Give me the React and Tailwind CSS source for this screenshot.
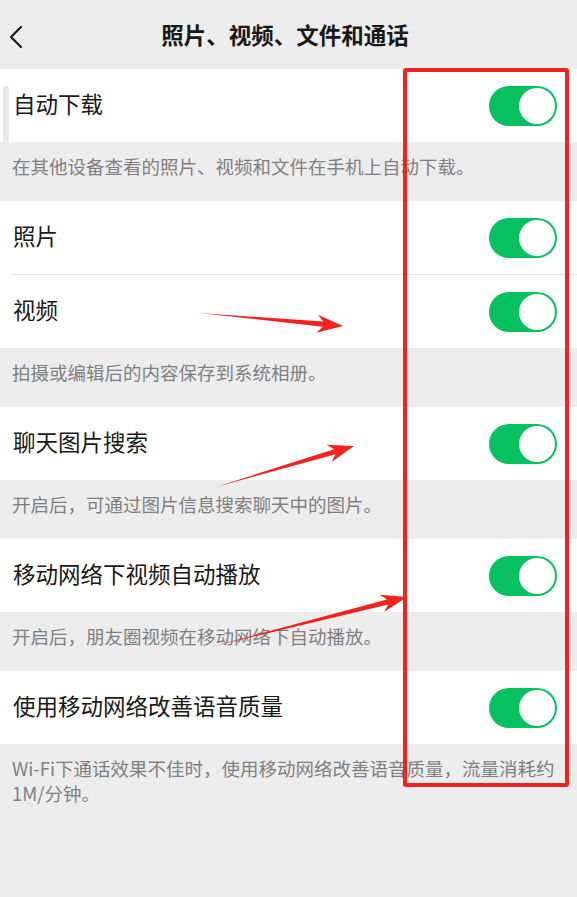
import React from "react";

const FONT = { fontFamily: '"Noto Sans CJK SC", "Noto Sans", sans-serif' };

function Toggle() {
  return (
    <div className="w-[68px] h-[40px] rounded-full bg-[#07c160] flex items-center justify-end pr-[2px]">
      <div className="w-[36px] h-[36px] rounded-full bg-white" />
    </div>
  );
}

function Row({ label, divider }) {
  return (
    <div className="bg-white">
      <div className="h-[73px] flex items-center justify-between pl-[13px] pr-[20px]">
        <span className="text-[22.5px] text-[#191919] leading-none -mt-[4px]">{label}</span>
        <Toggle />
      </div>
      {divider && <div className="ml-[11px] h-px bg-[#e6e6e6]" />}
    </div>
  );
}

function Desc({ children }) {
  return (
    <div className="min-h-[59px] pl-[12px] pr-[16px] pt-[12px] pb-[8px] text-[18.5px] leading-[25px] text-[#808080]">
      {children}
    </div>
  );
}

function Arrow({ x1, y1, x2, y2 }) {
  const dx = x2 - x1;
  const dy = y2 - y1;
  const L = Math.hypot(dx, dy);
  const ux = dx / L;
  const uy = dy / L;
  const nx = -uy;
  const ny = ux;
  const at = (s, w) => `${x1 + ux * s + nx * w},${y1 + uy * s + ny * w}`;
  const pts = [
    at(0, 0),
    at(L - 20, 2.6),
    at(L - 26, 9),
    at(L, 0),
    at(L - 26, -9),
    at(L - 20, -2.6),
  ].join(" ");
  return <polygon points={pts} fill="#f2231c" />;
}

export default function App() {
  return (
    <div className="relative w-full min-h-[897px] bg-[#ededed] overflow-hidden" style={FONT}>
      {/* Header */}
      <div className="relative h-[69px] flex items-center justify-center">
        <svg className="absolute left-[8px] top-[25px]" width="18" height="24" viewBox="0 0 18 24">
          <polyline points="13,2 3,12 13,22" fill="none" stroke="#1a1a1a" strokeWidth="2.2" strokeLinecap="round" strokeLinejoin="round" />
        </svg>
        <h1 className="text-[22.5px] font-bold text-[#191919] -ml-[7px]">照片、视频、文件和通话</h1>
      </div>

      <Row label="自动下载" />
      <Desc>在其他设备查看的照片、视频和文件在手机上自动下载。</Desc>

      <Row label="照片" divider />
      <Row label="视频" />
      <Desc>拍摄或编辑后的内容保存到系统相册。</Desc>

      <Row label="聊天图片搜索" />
      <Desc>开启后，可通过图片信息搜索聊天中的图片。</Desc>

      <Row label="移动网络下视频自动播放" />
      <Desc>开启后，朋友圈视频在移动网络下自动播放。</Desc>

      <Row label="使用移动网络改善语音质量" />
      <Desc>Wi-Fi下通话效果不佳时，使用移动网络改善语音质量，流量消耗约1M/分钟。</Desc>

      {/* scroll indicator */}
      <div className="absolute left-[3px] top-[86px] w-[6px] h-[60px] rounded-full bg-[#e8e8e8]" />

      {/* annotation box */}
      <div className="absolute left-[403px] top-[68px] w-[166px] h-[719px] border-[4px] border-[#f2231c] rounded-[3px] pointer-events-none" />

      {/* annotation arrows */}
      <svg className="absolute left-0 top-0 pointer-events-none" width="577" height="897">
        <Arrow x1={199} y1={313} x2={343} y2={326} />
        <Arrow x1={216} y1={487} x2={354} y2={446} />
        <Arrow x1={210} y1={647} x2={407} y2={597} />
      </svg>
    </div>
  );
}
